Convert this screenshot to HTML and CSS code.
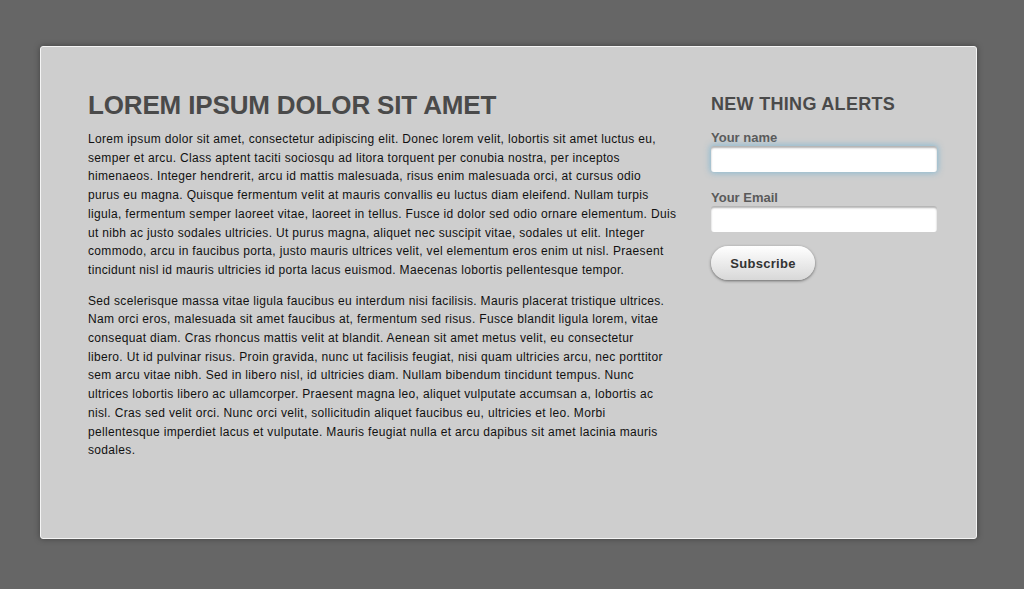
FILE: index.html
```html
<!DOCTYPE html>
<html>
<head>
<meta charset="utf-8">
<link rel="stylesheet" href="styles.css">
</head>
<body>
<div class="card">
  <div class="main">
    <h1 class="title">LOREM IPSUM DOLOR SIT AMET</h1>
    <p class="para">Lorem ipsum dolor sit amet, consectetur adipiscing elit. Donec lorem velit, lobortis sit amet luctus eu,<br>
semper et arcu. Class aptent taciti sociosqu ad litora torquent per conubia nostra, per inceptos<br>
himenaeos. Integer hendrerit, arcu id mattis malesuada, risus enim malesuada orci, at cursus odio<br>
purus eu magna. Quisque fermentum velit at mauris convallis eu luctus diam eleifend. Nullam turpis<br>
ligula, fermentum semper laoreet vitae, laoreet in tellus. Fusce id dolor sed odio ornare elementum. Duis<br>
ut nibh ac justo sodales ultricies. Ut purus magna, aliquet nec suscipit vitae, sodales ut elit. Integer<br>
commodo, arcu in faucibus porta, justo mauris ultrices velit, vel elementum eros enim ut nisl. Praesent<br>
tincidunt nisl id mauris ultricies id porta lacus euismod. Maecenas lobortis pellentesque tempor.</p>
    <p class="para">Sed scelerisque massa vitae ligula faucibus eu interdum nisi facilisis. Mauris placerat tristique ultrices.<br>
Nam orci eros, malesuada sit amet faucibus at, fermentum sed risus. Fusce blandit ligula lorem, vitae<br>
consequat diam. Cras rhoncus mattis velit at blandit. Aenean sit amet metus velit, eu consectetur<br>
libero. Ut id pulvinar risus. Proin gravida, nunc ut facilisis feugiat, nisi quam ultricies arcu, nec porttitor<br>
sem arcu vitae nibh. Sed in libero nisl, id ultricies diam. Nullam bibendum tincidunt tempus. Nunc<br>
ultrices lobortis libero ac ullamcorper. Praesent magna leo, aliquet vulputate accumsan a, lobortis ac<br>
nisl. Cras sed velit orci. Nunc orci velit, sollicitudin aliquet faucibus eu, ultricies et leo. Morbi<br>
pellentesque imperdiet lacus et vulputate. Mauris feugiat nulla et arcu dapibus sit amet lacinia mauris<br>
sodales.</p>
  </div>
  <form class="side">
    <h2 class="side-title">NEW THING ALERTS</h2>
    <label class="label" for="name">Your name</label>
    <input class="field focus" id="name" type="text">
    <label class="label" for="email">Your Email</label>
    <input class="field" id="email" type="text">
    <button class="btn" type="button">Subscribe</button>
  </form>
</div>
</body>
</html>
```
FILE: styles.css
```css
html, body {
  margin: 0;
  padding: 0;
  background: #666666;
  font-family: "Liberation Sans", Arial, sans-serif;
}
body {
  padding: 46px 46px 49px 40px;
}
.card {
  width: 937px;
  height: 493px;
  box-sizing: border-box;
  background: #cecece;
  border: 1px solid #f4f4f4;
  border-radius: 3px;
  box-shadow: 0 0 6px rgba(0,0,0,0.35);
  display: flex;
  padding: 43px 39px 0 47px;
  gap: 33px;
}
.main {
  width: 590px;
  flex-shrink: 0;
}
.title {
  margin: 0 0 10px 0;
  font-size: 26px;
  line-height: 30px;
  font-weight: bold;
  color: #4a4a4a;
  letter-spacing: -0.15px;
}
.para {
  margin: 0 0 12px 0;
  font-size: 12px;
  line-height: 18.7px;
  color: #111111;
  letter-spacing: 0.33px;
  white-space: nowrap;
}
.side {
  display: flex;
  flex-direction: column;
  align-items: flex-start;
  width: 226px;
  flex-shrink: 0;
  padding-top: 2px;
}
.side-title {
  margin: 0 0 15px 0;
  font-size: 18px;
  line-height: 24px;
  font-weight: bold;
  color: #4a4a4a;
  letter-spacing: 0.3px;
}
.label {
  font-size: 13px;
  line-height: 14px;
  font-weight: bold;
  color: #5a5a5a;
  margin-bottom: 1px;
}
.field {
  width: 226px;
  height: 26px;
  box-sizing: border-box;
  border: none;
  border-radius: 3px;
  background: #ffffff;
  box-shadow: inset 0 2px 2px rgba(0,0,0,0.3);
  margin: 0 0 19px 0;
  outline: none;
}
.field.focus {
  box-shadow: inset 0 2px 2px rgba(0,0,0,0.3), 0 0 6px 1px rgba(120,180,210,0.8);
}
.btn {
  width: 104px;
  height: 34px;
  margin-top: -5px;
  border: none;
  border-radius: 17px;
  background: linear-gradient(#ffffff, #d8d8d8);
  box-shadow: 0 1px 3px rgba(0,0,0,0.5);
  font-family: "Liberation Sans", Arial, sans-serif;
  font-size: 13px;
  font-weight: bold;
  color: #333333;
  letter-spacing: 0.3px;
}
```
